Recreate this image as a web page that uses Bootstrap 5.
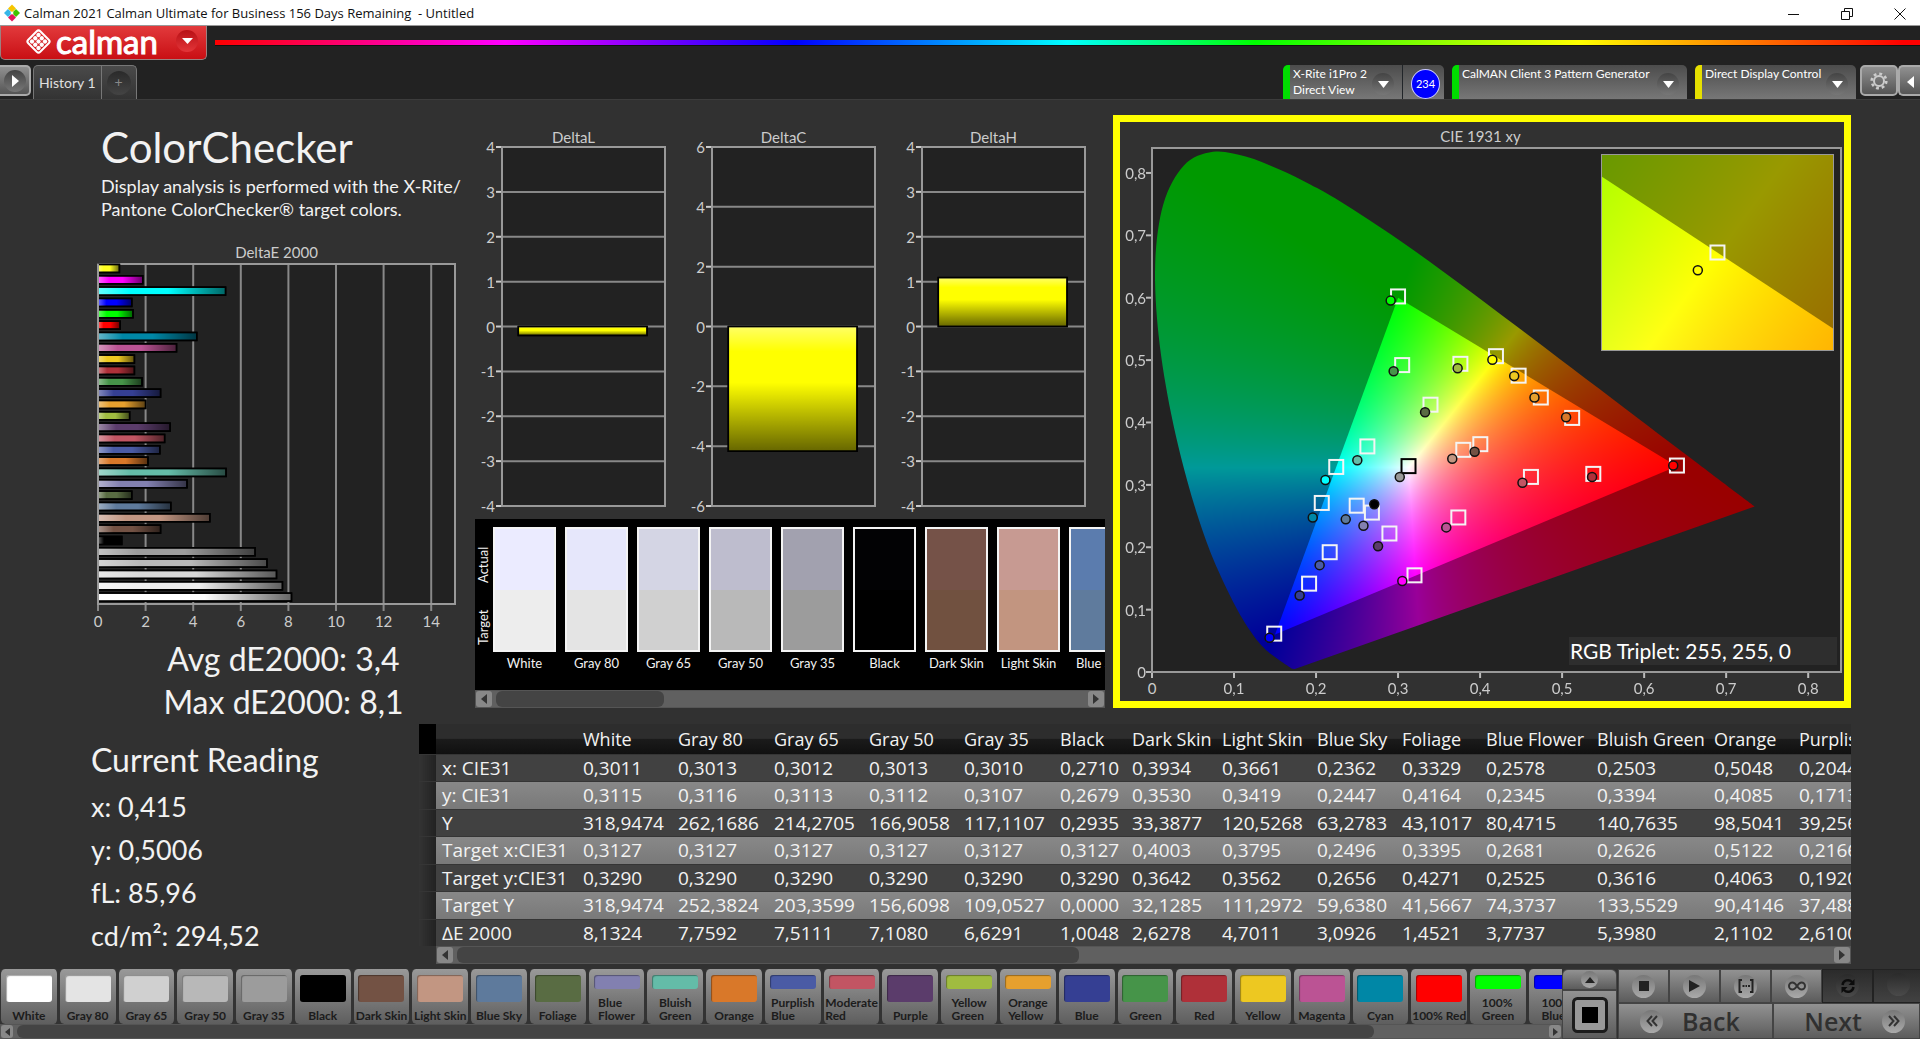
<!DOCTYPE html>
<html lang="en">
<head>
<meta charset="utf-8">
<meta name="viewport" content="width=device-width, initial-scale=1">
<title>Calman 2021 - Untitled</title>
<link href="https://cdn.jsdelivr.net/npm/bootstrap@5.3.0/dist/css/bootstrap.min.css" rel="stylesheet">
<style>
  body { font-family: Lato, "Open Sans", sans-serif; background: #313131; color: #f2f2f2; font-size: 16px; line-height: 20px; }
  button { font-family: inherit; color: inherit; padding: 0; border: 0; background: none; }
  .min-0 { min-width: 0; }

  /* window frame */
  .titlebar { height: 26px; background: #fff; color: #111; font-family: "Open Sans", sans-serif; font-size: 13px; border-bottom: 1px solid #999; overflow: hidden; }
  .titlebar .winbtns { margin-right: -6px; }
  .titlebar .winbtn { width: 53px; height: 25px; }
  .topbar { background: #222; }
  .brand { width: 207px; height: 34px; background: linear-gradient(#e23a3c, #c90f14); border: 1px solid #9c8080; border-top: 0; border-radius: 0 0 5px 5px; font-size: 33px; line-height: 26px; padding-bottom: 3px; color: #fff; -webkit-text-stroke: 1px #fff; }
  .drop { width: 22px; height: 22px; border-radius: 50%; background: linear-gradient(#444, #777); display: flex; align-items: center; justify-content: center; flex: none; }
  .drop.red { background: linear-gradient(#b81015, #e33539); }
  .rainbow { height: 6px; margin-top: 14px; background: linear-gradient(90deg, #f00 0, #f0f 17%, #00f 34%, #0ff 50%, #0f0 61%, #ff0 80%, #f00 99%); border-bottom: 1px solid #111; }
  .tabs { height: 34px; margin-top: 5px; }
  .knob { height: 31px; border: 2px solid #aaa; border-radius: 5px; background: linear-gradient(#909090, #555); }
  .tabgrp { margin-left: 2px; border: 1px solid #777; border-bottom: 0; border-radius: 5px 5px 0 0; background: linear-gradient(#4a4a4a, #333); color: #e0e0e0; font-size: 14px; }
  .tabgrp button { padding: 0 5px; }
  .tabgrp button + button { border-left: 1px solid #777; color: #888; }
  .plus { width: 24px; height: 24px; border-radius: 50%; background: linear-gradient(#2a2a2a, #444); line-height: 22px; }
  .device { background: linear-gradient(#4c4c4c, #777); border-radius: 5px 5px 0 0; border-left: 7px solid #0d0; font-size: 12px; line-height: 16px; color: #fff; text-align: left; padding-left: 3px; width: 161px; }
  .device > span:first-child { padding-top: 1px; }
  .device.wide { width: 235px; }
  .device.warn { border-left-color: #e6e000; }
  .count { width: 29px; height: 30px; border-radius: 50%; background: #00f; border: 1px solid #ccf; font-size: 11px; line-height: 27px; text-align: center; }

  /* workspace */
  .stage { border-top: 1px solid #3c3c3c; }
  .leftcol { flex: 0 0 475px; min-width: 0; padding: 23px 20px 1px 98px; }
  .leftcol h1 { font-size: 42px; line-height: 48px; margin: 0 0 4px 3px; font-weight: 400; }
  .leftcol p { font-size: 18px; line-height: 23px; margin: 0 0 21px 3px; }
  .leftcol .caption { margin-bottom: 2px; }
  .caption { font-size: 15px; line-height: 20px; color: #ccc; text-align: center; }
  .avg { font-size: 32px; line-height: 43px; text-align: center; margin-top: 33px; padding-left: 14px; }
  .plot { position: relative; background: #222; flex: 1 1 0; min-height: 0; }
  .plot svg, .plot canvas { position: absolute; inset: 0; width: 100%; height: 100%; overflow: visible; display: block; }
  .plot text { fill: #ccc; font-size: 15px; }
  .work { display: grid; grid-template-columns: minmax(0, 630fr) minmax(0, 738fr); gap: 8px; padding: 15px 69px 16px 0; }
  .ciecol { border: 7px solid #ff0; padding: 4px 3px 29px 32px; }
  .ciecol .caption { margin-bottom: 2px; padding-right: 32px; }
  .delta { flex: 1 1 0; padding: 12px 20px 13px 27px; }
  .delta .caption { padding-right: 20px; }
  .strip { background: #000; height: 171px; overflow: hidden; }
  .vert { writing-mode: vertical-rl; transform: rotate(180deg); font-size: 13px; line-height: 17px; width: 18px; height: 132px; padding-bottom: 6px; }
  .swatch { flex: 0 0 63px; font-size: 13px; line-height: 22px; text-align: center; }
  .swatch .pair { height: 125px; border: 2px solid #f4f4f4; display: flex; flex-direction: column; }
  .swatch .pair i { flex: 1; }
  .sbar { height: 18px; background: #606060; border: 1px solid #555; }
  .sbar .thumb { background: #444; border-radius: 6px; }
  .sbar button { width: 16px; background: #888; border-radius: 3px; display: flex; align-items: center; justify-content: center; flex: none; }
  .inset { position: absolute; right: 1%; top: 1.2%; width: 33.8%; height: 37.6%; border: 1px solid #999; }
  .triplet { position: absolute; right: 4px; bottom: 7px; width: 268px; height: 28px; background: #2e2e2e; font-size: 21px; line-height: 28px; padding-left: 1px; color: #fff; }

  /* readings */
  .reading { flex: 0 0 419px; padding: 14px 0 0 91px; font-size: 27px; line-height: 43px; }
  .reading h2 { font-size: 32px; line-height: 43px; margin: 0 0 4px; font-weight: 400; }
  .datawrap { flex: 1 1 0; margin-right: 69px; min-width: 0; }
  .datawrap .clip { overflow: hidden; }
  .grid { table-layout: fixed; width: 1540px; border-collapse: collapse; font-family: "Open Sans", sans-serif; font-size: 19px; line-height: 24px; white-space: nowrap; }
  .grid th, .grid td { font-weight: 400; padding: 0 0 0 6px; }
  .grid thead tr { height: 30px; background: linear-gradient(#2d2d2d 0, #2d2d2d 48%, #1b1b1b 50%, #101010 100%); font-size: 18px; }
  .grid tbody tr { height: 27px; background: #414141; border-top: 1px solid #353535; }
  .grid tbody tr:nth-child(even) { height: 28px; background: linear-gradient(#888, #797979); }
  .grid .rowhead { background: linear-gradient(90deg, #333, #222); padding: 0; }
  .grid thead .rowhead { background: #000; }

  /* transport */
  .footerbar { height: 70px; margin-top: 5px; background: #313131; }
  .patches { height: 55px; overflow: hidden; background: #333; }
  .patch { flex: 0 0 3.763%; height: 55px; border-left: 1px solid #333; border-right: 2px solid #333; border-radius: 5px; background: linear-gradient(#999, #5e5e5e); color: #1c1c1c; font-size: 12px; font-weight: 700; line-height: 13px; display: flex; flex-direction: column; justify-content: space-between; align-items: center; padding: 6px 0 2px; text-align: left; white-space: nowrap; overflow: hidden; }
  .patch i { width: 46px; height: 27px; border-radius: 3px; box-shadow: inset 1px 1px 1px rgba(0,0,0,.35); flex: none; }
  .patch.two i { height: 14px; }
  .tool { background: linear-gradient(#929292, #5c5c5c); border: 1px solid #444; }
  .tool.off { background: linear-gradient(#2b2b2b, #424242); border-color: #222; }
  .keys .tool { flex: 0 0 51px; }
  .disc { width: 23px; height: 23px; border-radius: 50%; background: linear-gradient(#777, #aaa); display: inline-flex; align-items: center; justify-content: center; }
  .off .disc { background: linear-gradient(#2a2a2a, #4a4a4a); }
  .nav-txt { font-family: "Open Sans", sans-serif; font-size: 25px; line-height: 30px; font-weight: 600; color: #303030; }
  .panelbtn { width: 55px; margin-right: 1px; }
  .transport { flex: 0 0 302px; overflow: hidden; }
  .backbtn { width: 155px; padding-left: 21px; gap: 19px; }
  .nextbtn { padding-right: 14px; gap: 20px; }
</style>
</head>
<body class="d-flex flex-column min-vh-100 overflow-hidden">

<header>
  <div class="titlebar d-flex align-items-center">
    <svg class="ms-1 me-1" width="16" height="20" viewBox="-9 -10 18 20"><path fill="#f6c500" d="M0-9.500 4.500-5 0-.5-4.500-5z"/><path fill="#41c300" d="M4.500-4.500 9 0 4.500 4.500 0 0z"/><path fill="#e3175c" d="M0 .5 4.500 5 0 9.500-4.500 5z"/><path fill="#36b6e8" d="M-4.500-4.500 0 0-4.500 4.500-9 0z"/><path fill="#fff" d="M0-2 2 0 0 2-2 0z"/></svg>
    <span class="flex-fill">Calman 2021 Calman Ultimate for Business 156 Days Remaining &nbsp;- Untitled</span>
    <div class="winbtns d-flex">
    <button class="winbtn" aria-label="Minimize"><svg width="12" height="12"><path d="M0 6.500H11" stroke="#111"/></svg></button>
    <button class="winbtn" aria-label="Restore"><svg width="12" height="12" fill="none" stroke="#111"><path d="M.5 3.500h8v8h-8zM3.500 3V.5h8v8H9"/></svg></button>
    <button class="winbtn" aria-label="Close"><svg width="12" height="12"><path d="M.5.5l11 11M11.500.5l-11 11" stroke="#111"/></svg></button>
    </div>
  </div>
  <div class="topbar">
    <div class="d-flex align-items-start">
      <button class="brand d-flex align-items-center flex-shrink-0 ps-4">
        <svg width="27" height="27" viewBox="-13.500 -13.500 27 27"><g transform="rotate(45)"><rect x="-8.500" y="-8.500" width="17" height="17" rx="2.500" fill="none" stroke="#fff" stroke-width="2"/><g fill="#fff" stroke="none"><circle cx="-4.600" cy="-4.600" r="2.200"/><circle cy="-4.600" r="2.200"/><circle cx="4.600" cy="-4.600" r="2.200"/><circle cx="-4.600" r="2.200"/><circle r="2.200"/><circle cx="4.600" r="2.200"/><circle cx="-4.600" cy="4.600" r="2.200"/><circle cy="4.600" r="2.200"/><circle cx="4.600" cy="4.600" r="2.200"/></g></g></svg>
        <span class="ms-1 flex-fill text-start">calman</span>
        <span class="drop red me-2"><svg width="11" height="6"><path d="M0 0h11L5.500 6z" fill="#fff"/></svg></span>
      </button>
      <div class="rainbow flex-fill ms-2"></div>
    </div>
    <div class="tabs d-flex">
      <button class="knob ps-1 flex-shrink-0 rounded-start-0 border-start-0" style="width:31px" aria-label="Expand"><span class="drop"><svg width="7" height="12"><path d="M0 0v12l7-6z" fill="#fff"/></svg></span></button>
      <div class="tabgrp d-flex me-auto">
        <button>History 1</button>
        <button aria-label="Add"><span class="plus d-block">+</span></button>
      </div>
      <button class="device d-flex"><span>X-Rite i1Pro 2<br>Direct View</span><span class="drop mt-2 ms-auto me-2"><svg width="11" height="7"><path d="M0 0h11L5.500 7z" fill="#fff"/></svg></span><span class="border-start border-dark ps-2 pe-1 pt-1 h-100"><span class="count d-block">234</span></span></button>
      <button class="device wide d-flex ms-2"><span>CalMAN Client 3 Pattern Generator</span><span class="drop mt-2 ms-auto me-2"><svg width="11" height="7"><path d="M0 0h11L5.500 7z" fill="#fff"/></svg></span></button>
      <button class="device warn d-flex ms-2 me-1"><span>Direct Display Control</span><span class="drop mt-2 ms-auto me-2"><svg width="11" height="7"><path d="M0 0h11L5.500 7z" fill="#fff"/></svg></span></button>
      <button class="knob flex-shrink-0" style="width:38px" aria-label="Settings"><svg width="20" height="20" viewBox="-10 -10 20 20" fill="none" stroke="#ccc"><circle r="5" stroke-width="2"/><circle r="7.300" stroke-width="2.600" stroke-dasharray="2.870 2.870"/></svg></button>
      <button class="knob flex-shrink-0 rounded-end-0 border-end-0" style="width:22px" aria-label="Collapse"><svg width="7" height="12"><path d="M7 0v12L0 6z" fill="#fff"/></svg></button>
    </div>
  </div>
</header>

<main class="stage flex-fill d-flex flex-column">
  <div class="d-flex flex-fill">
    <section class="leftcol d-flex flex-column">
      <h1>ColorChecker</h1>
      <p class="text-nowrap">Display analysis is performed with the X-Rite/<br>Pantone ColorChecker® target colors.</p>
      <div class="caption">DeltaE 2000</div>
      <div class="plot" id="deltaE"></div>
      <div class="avg">Avg dE2000: 3,4<br>Max dE2000: 8,1</div>
    </section>
    <div class="work flex-fill min-0">
      <section class="d-flex flex-column min-0">
        <div class="d-flex flex-fill">
          <div class="delta d-flex flex-column"><div class="caption">DeltaL</div><div class="plot" id="deltaL"></div></div>
          <div class="delta d-flex flex-column"><div class="caption">DeltaC</div><div class="plot" id="deltaC"></div></div>
          <div class="delta d-flex flex-column"><div class="caption">DeltaH</div><div class="plot" id="deltaH"></div></div>
        </div>
        <div class="strip d-flex pt-2">
          <div class="vert d-flex justify-content-around flex-shrink-0"><span>Target</span><span>Actual</span></div>
          <div class="d-flex" id="swatches" style="gap:9px"></div>
        </div>
        <div class="sbar d-flex"><button aria-label="Scroll left"><svg width="6" height="10"><path d="M6 0v10L0 5z" fill="#333"/></svg></button><div class="thumb ms-1" style="width:168px"></div><button class="ms-auto" aria-label="Scroll right"><svg width="6" height="10"><path d="M0 0v10l6-5z" fill="#333"/></svg></button></div>
      </section>
      <section class="ciecol d-flex flex-column min-0">
        <div class="caption">CIE 1931 xy</div>
        <div class="plot" id="cie">
          <canvas id="gamut"></canvas>
          <div class="inset"><canvas id="gamutZoom"></canvas></div>
          <div class="triplet">RGB Triplet: 255, 255, 0</div>
        </div>
      </section>
    </div>
  </div>

  <div class="d-flex">
    <section class="reading">
      <h2>Current Reading</h2>
      <div>x: 0,415</div><div>y: 0,5006</div><div>fL: 85,96</div><div>cd/m²: 294,52</div>
    </section>
    <section class="datawrap">
      <div class="clip"><table class="grid" id="grid"></table></div>
      <div class="sbar d-flex" style="margin-left:17px"><button aria-label="Scroll left"><svg width="6" height="10"><path d="M6 0v10L0 5z" fill="#333"/></svg></button><div class="thumb ms-1" style="width:44%"></div><button class="ms-auto" aria-label="Scroll right"><svg width="6" height="10"><path d="M0 0v10l6-5z" fill="#333"/></svg></button></div>
    </section>
  </div>
</main>

<footer class="footerbar d-flex">
  <div class="flex-fill min-0">
    <div class="patches d-flex" id="patches"></div>
    <div class="sbar d-flex" style="height:15px"><button aria-label="Scroll left" style="width:12px"><svg width="5" height="8"><path d="M5 0v8L0 4z" fill="#333"/></svg></button><div class="thumb ms-1" style="width:87%"></div><button class="ms-auto" aria-label="Scroll right" style="width:12px"><svg width="5" height="8"><path d="M0 0v8l5-4z" fill="#333"/></svg></button></div>
  </div>
  <div class="panelbtn d-flex flex-column flex-shrink-0">
    <button class="tool rounded-top d-flex align-items-center justify-content-center" style="height:21px" aria-label="Show"><span class="disc" style="width:17px;height:17px"><svg width="10" height="6"><path d="M0 6h10L5 0z" fill="#222"/></svg></span></button>
    <button class="tool flex-fill" aria-label="Stop pattern"><svg width="36" height="36"><rect x="1.500" y="1.500" width="33" height="33" rx="4" fill="#999" stroke="#1c1c1c" stroke-width="3"/><rect x="10" y="10" width="16" height="16" fill="#000"/></svg></button>
  </div>
  <div class="transport d-flex flex-column">
    <div class="keys d-flex flex-fill">
      <button class="tool" aria-label="Stop"><span class="disc"><svg width="10" height="10"><rect width="10" height="10" fill="#222"/></svg></span></button>
      <button class="tool" aria-label="Play"><span class="disc"><svg width="11" height="12"><path d="M0 0v12l11-6z" fill="#222"/></svg></span></button>
      <button class="tool" aria-label="Range"><span class="disc"><svg width="16" height="14" fill="none" stroke="#222" stroke-width="2"><path d="M4 1H1.500v12H4M12 1h2.500v12H12M4.500 7h2M7.500 7h1.500M10 7h2"/></svg></span></button>
      <button class="tool" aria-label="Loop"><span class="disc"><svg width="18" height="10" viewBox="0 0 18 10" fill="none" stroke="#333" stroke-width="2"><path d="M9 5C7 2 5.500 1.500 4.500 1.500a3.500 3.500 0 0 0 0 7C5.500 8.500 7 8 9 5s3.500-3.500 4.500-3.500a3.500 3.500 0 0 1 0 7C12.500 8.500 11 8 9 5z"/></svg></span></button>
      <button class="tool off" aria-label="Refresh"><span class="disc"><svg width="16" height="16" viewBox="0 0 16 16" fill="none" stroke="#0c0c0c" stroke-width="2.400"><path d="M2.500 7a5.500 5.500 0 0 1 9.500-3M13.500 9a5.500 5.500 0 0 1-9.500 3"/><path fill="#0c0c0c" stroke="none" d="M14.500 1v6h-6zM1.500 15V9h6z"/></svg></span></button>
      <button class="tool off" aria-label="Record"><span class="disc"></span></button>
    </div>
    <div class="d-flex" style="height:36px">
      <button class="tool backbtn d-flex align-items-center"><span class="disc"><svg width="12" height="12" fill="none" stroke="#333" stroke-width="2"><path d="M6 1 1.500 6 6 11M11 1 6.500 6 11 11"/></svg></span><span class="nav-txt">Back</span></button>
      <button class="tool nextbtn d-flex align-items-center flex-fill justify-content-end"><span class="nav-txt">Next</span><span class="disc"><svg width="12" height="12" fill="none" stroke="#333" stroke-width="2"><path d="M1 1l4.500 5L1 11M6 1l4.500 5L6 11"/></svg></span></button>
    </div>
  </div>
</footer>

<script src="https://cdn.jsdelivr.net/npm/bootstrap@5.3.0/dist/js/bootstrap.bundle.min.js"></script>
<script>
const $ = id => document.getElementById(id);

/* patches: name, target colour */
const patches = [['White','#fff'],['Gray 80','#e4e4e4'],['Gray 65','#d0d0d0'],['Gray 50','#b8b8b8'],['Gray 35','#9c9c9c'],['Black','#000'],['Dark Skin','#735244'],['Light Skin','#c29682'],['Blue Sky','#5e7a9c'],['Foliage','#596c43'],['Blue<br>Flower','#8280b0'],['Bluish<br>Green','#64bca8'],['Orange','#d97829'],['Purplish<br>Blue','#4a5ba5'],['Moderate<br>Red','#c25563'],['Purple','#5b3c6b'],['Yellow<br>Green','#a0bc40'],['Orange<br>Yellow','#e6a02e'],['Blue','#353f93'],['Green','#469449'],['Red','#af3039'],['Yellow','#edc821'],['Magenta','#bb5394'],['Cyan','#0087a6'],['100% Red','#f00'],['100%<br>Green','#0f0'],['100%<br>Blue','#00f']];
$('patches').innerHTML = patches.map(([n, c]) => `<button class="patch${n.includes('<br>') ? ' two' : ''}"><i style="background:${c}"></i><span>${n}</span></button>`).join('');

/* actual over target */
const pairs = [['White','#ebebff','#ededed'],['Gray 80','#e6e7fb','#e4e4e4'],['Gray 65','#d4d5e4','#d0d0d0'],['Gray 50','#bebdce','#b9b9b9'],['Gray 35','#a2a1af','#9c9c9c'],['Black','#020204','#000'],['Dark Skin','#755248','#715140'],['Light Skin','#c79a92','#c29580'],['Blue Sky','#5b7cae','#5f7b9d']];
$('swatches').innerHTML = pairs.map(([n, a, t]) => `<div class="swatch"><div class="pair"><i style="background:${a}"></i><i style="background:${t}"></i></div>${n}</div>`).join('');

/* results table */
const cols = [['White',95],['Gray 80',96],['Gray 65',95],['Gray 50',95],['Gray 35',96],['Black',72],['Dark Skin',90],['Light Skin',95],['Blue Sky',85],['Foliage',84],['Blue Flower',111],['Bluish Green',117],['Orange',85],['Purplish Blue',166]];
const rows = `x: CIE31|0,3011|0,3013|0,3012|0,3013|0,3010|0,2710|0,3934|0,3661|0,2362|0,3329|0,2578|0,2503|0,5048|0,2044
y: CIE31|0,3115|0,3116|0,3113|0,3112|0,3107|0,2679|0,3530|0,3419|0,2447|0,4164|0,2345|0,3394|0,4085|0,1713
Y|318,9474|262,1686|214,2705|166,9058|117,1107|0,2935|33,3877|120,5268|63,2783|43,1017|80,4715|140,7635|98,5041|39,2560
Target x:CIE31|0,3127|0,3127|0,3127|0,3127|0,3127|0,3127|0,4003|0,3795|0,2496|0,3395|0,2681|0,2626|0,5122|0,2166
Target y:CIE31|0,3290|0,3290|0,3290|0,3290|0,3290|0,3290|0,3642|0,3562|0,2656|0,4271|0,2525|0,3616|0,4063|0,1920
Target Y|318,9474|252,3824|203,3599|156,6098|109,0527|0,0000|32,1285|111,2972|59,6380|41,5667|74,3737|133,5529|90,4146|37,4880
ΔE 2000|8,1324|7,7592|7,5111|7,1080|6,6291|1,0048|2,6278|4,7011|3,0926|1,4521|3,7737|5,3980|2,1102|2,6100`.split('\n').map(r => r.split('|'));
$('grid').innerHTML = `<colgroup><col style="width:17px"><col style="width:141px">${cols.map(c => `<col style="width:${c[1]}px">`).join('')}</colgroup>
<thead><tr><th class="rowhead"></th><th></th>${cols.map(c => `<th scope="col">${c[0]}</th>`).join('')}</tr></thead>
<tbody>${rows.map(r => `<tr><td class="rowhead"></td><th scope="row">${r[0]}</th>${r.slice(1).map(v => `<td>${v}</td>`).join('')}</tr>`).join('')}</tbody>`;

/* charts: coordinates in percent of the plot, so they follow its size */
const line = (x1, y1, x2, y2, c) => `<line x1="${x1}%" y1="${y1}%" x2="${x2}%" y2="${y2}%" stroke="${c || '#888'}" stroke-width="2"/>`;
const frame = '<rect width="100%" height="100%" fill="none" stroke="#999" stroke-width="2"/>';
const defs = `<svg width="0" height="0" style="position:absolute"><defs>
<linearGradient id="shadeX"><stop offset="0" stop-color="#fff" stop-opacity=".4"/><stop offset=".25" stop-color="#fff" stop-opacity="0"/><stop offset=".55" stop-opacity="0"/><stop offset="1" stop-opacity=".6"/></linearGradient>
<linearGradient id="shadeY" x2="0" y2="1"><stop offset="0" stop-color="#fff" stop-opacity=".4"/><stop offset=".2" stop-color="#fff" stop-opacity="0"/><stop offset=".45" stop-opacity="0"/><stop offset="1" stop-opacity=".6"/></linearGradient></defs></svg>`;
document.body.insertAdjacentHTML('beforeend', defs);

const dE = [['#ff2',.9],['#f0f',1.88],['#0ff',5.36],['#00f',1.42],['#0f0',1.47],['#f00',.93],['#0087a6',4.15],['#bb5394',3.3],['#edc821',1.53],['#af3039',1.53],['#469449',1.85],['#353f93',2.63],['#e6a02e',2],['#a0bc40',1.33],['#5b3c6b',3.03],['#c25563',2.8],['#4a5ba5',2.6],['#d97829',2.1],['#64bca8',5.38],['#8280b0',3.74],['#596c43',1.42],['#5e7a9c',3.06],['#c29682',4.7],['#735244',2.63],['#000',1],['#9c9c9c',6.6],['#b8b8b8',7.1],['#d8d8d8',7.5],['#eee',7.75],['#fff',8.13]];
let s = '';
for (let v = 0; v < 15; v += 2) s += line(v / .15, 0, v / .15, 100) + `<g transform="translate(0 7)"><line x1="${v / .15}%" y1="100%" x2="${v / .15}%" y2="98%" stroke="#888" stroke-width="2"/></g><text x="${v / .15}%" y="100%" dy="23" text-anchor="middle">${v}</text>`;
s += frame;
dE.forEach(([c, v], i) => { for (const f of [c, 'url(#shadeX)']) s += `<rect x="0" y="${(i + .04) / .3}%" width="${v / .15}%" height="2.350%" fill="${f}" stroke="#000" stroke-width="1.500"/>`; });
s += line(0, 0, 0, 100, '#999');
$('deltaE').innerHTML = `<svg>${s}</svg>`;

function delta(id, max, step, val) {
  let s = '';
  for (let v = -max; v <= max; v += step) {
    const y = (max - v) / max * 50;
    s += line(0, y, 100, y) + `<g transform="translate(-6 0)"><line x1="0" x2="6" y1="${y}%" y2="${y}%" stroke="#ccc" stroke-width="2"/></g><text x="0" y="${y}%" dx="-7" dy="6" text-anchor="end">${v}</text>`;
  }
  s += frame;
  const y = (max - Math.max(val, 0)) / max * 50, h = Math.abs(val) / max * 50;
  for (const f of ['#ff0', 'url(#shadeY)']) s += `<rect x="10%" y="${y}%" width="79%" height="${h}%" fill="${f}" stroke="#000" stroke-width="1.500"/>`;
  $(id).innerHTML = `<svg>${s}</svg>`;
}
delta('deltaL', 4, 1, -.2);
delta('deltaC', 6, 2, -4.17);
delta('deltaH', 4, 1, 1.09);

/* chromaticity diagram */
const locus = [.1741,.005,.1714,.0051,.1689,.0069,.1644,.0109,.1566,.0177,.144,.0297,.1355,.0399,.1241,.0578,.1096,.0868,.0913,.1327,.0687,.2007,.0454,.295,.0235,.4127,.0082,.5384,.0039,.6548,.0139,.7502,.0389,.812,.0743,.8338,.1142,.8262,.1547,.8059,.1929,.7816,.2296,.7543,.3016,.6923,.3731,.6245,.4441,.5547,.5125,.4866,.5752,.4242,.627,.3725,.6658,.334,.6915,.3083,.719,.2809,.7347,.2653];
const primaries = [[.64,.33],[.3,.6],[.15,.06]];
function field(w, h, b, k) {
  const c = document.createElement('canvas'); c.width = w; c.height = h;
  const g = c.getContext('2d'), im = g.createImageData(w, h);
  for (let j = 0, o = 0; j < h; j++) for (let i = 0; i < w; i++, o += 4) {
    const x = b[0] + (b[1] - b[0]) * i / w, y = b[3] - (b[3] - b[2]) * j / h, z = 1 - x - y;
    const r = Math.max(0, 3.2406 * x - 1.5372 * y - .4986 * z), gg = Math.max(0, -.9689 * x + 1.8758 * y + .0415 * z), bb = Math.max(0, .0557 * x - .204 * y + 1.057 * z);
    const m = k * 255 / Math.max(r, gg, bb);
    im.data[o] = r * m; im.data[o + 1] = gg * m; im.data[o + 2] = bb * m; im.data[o + 3] = 255;
  }
  g.putImageData(im, 0, 0);
  return c;
}
function paint(cv, b) {
  const w = cv.width = cv.clientWidth, h = cv.height = cv.clientHeight, g = cv.getContext('2d');
  const P = (x, y) => [(x - b[0]) / (b[1] - b[0]) * w, (b[3] - y) / (b[3] - b[2]) * h];
  const pts = []; for (let i = 0; i < locus.length; i += 2) pts.push(P(locus[i], locus[i + 1]));
  g.save(); g.beginPath(); g.moveTo(...pts[0]);
  for (let i = 0; i < pts.length - 1; i++) {
    const a = pts[Math.max(0, i - 1)], p = pts[i], q = pts[i + 1], d = pts[Math.min(pts.length - 1, i + 2)];
    g.bezierCurveTo(p[0] + (q[0] - a[0]) / 6, p[1] + (q[1] - a[1]) / 6, q[0] - (d[0] - p[0]) / 6, q[1] - (d[1] - p[1]) / 6, q[0], q[1]);
  }
  g.closePath(); g.clip(); g.drawImage(field(w, h, b, .6), 0, 0); g.restore();
  g.save(); g.beginPath(); primaries.forEach(p => g.lineTo(...P(...p))); g.closePath(); g.clip(); g.drawImage(field(w, h, b, 1), 0, 0); g.restore();
}
const full = [0, .84, 0, .84], near = [.394, .4446, .4795, .5311];
function paintAll() { paint($('gamut'), full); paint($('gamutZoom'), near); }

/* target x,y, actual x,y, fill */
const marks = [[.3,.602,.291,.5954,'#0f0'],[.305,.492,.2946,.482,'#469449'],[.376,.494,.3726,.487,'#a0bc40'],[.4193,.5063,.415,.5006,'#ff0'],[.447,.475,.4416,.4746,'#edc821'],[.3395,.4285,.3329,.4164,'#596c43'],[.2626,.3616,.2503,.3394,'#64bca8'],[.2246,.3287,.2114,.3078,'#0ff'],[.3795,.3562,.3661,.3419,'#c29682'],[.4003,.3652,.3934,.353,'#735244'],[.207,.271,.196,.2477,'#0087a6'],[.2496,.2666,.2362,.2447,'#5e7a9c'],[.2681,.2555,.2578,.2345,'#8280b0'],[.2895,.222,.2756,.2017,'#5b3c6b'],[.2166,.192,.2044,.1713,'#4a5ba5'],[.1915,.1416,.18,.1226,'#353f93'],[.149,.0615,.1433,.055,'#00f'],[.3735,.2477,.3588,.2318,'#bb5394'],[.32,.155,.3052,.146,'#f0f'],[.474,.44,.4663,.44,'#e6a02e'],[.5122,.4073,.5048,.4085,'#d97829'],[.462,.3127,.4517,.3035,'#c25563'],[.538,.3176,.5365,.3127,'#af3039'],[.64,.331,.6355,.331,'#f00']];
const box = (x, y, c) => `<rect x="${x}%" y="${y}%" width="14" height="14" transform="translate(-7 -7)" fill="none" stroke="${c}" stroke-width="2"/>`;
const dot = (x, y, c) => `<circle cx="${x}%" cy="${y}%" r="4.500" fill="${c}" stroke="#111" stroke-width="1.500"/>`;
const px = v => (v / .84 * 100).toFixed(2), py = v => (100 - v / .84 * 100).toFixed(2);
s = '';
for (let i = 0; i < 9; i++) {
  const t = i ? '0,' + i : '0';
  s += `<g transform="translate(0 6)"><line x1="${px(i / 10)}%" x2="${px(i / 10)}%" y1="99%" y2="100%" stroke="#bbb" stroke-width="2"/></g><text x="${px(i / 10)}%" y="100%" dy="22" text-anchor="middle">${t}</text>`;
  s += `<g transform="translate(-6 0)"><line x1="0" x2="6" y1="${py(i / 10)}%" y2="${py(i / 10)}%" stroke="#bbb" stroke-width="2"/></g><text x="0" y="${py(i / 10)}%" dx="-6" dy="6" text-anchor="end">${t}</text>`;
}
s += frame + box(px(.3127), py(.33), '#000') + marks.map(m => box(px(m[0]), py(m[1]), '#f4f4f4')).join('') + dot(px(.3021), py(.3125), '#999') + marks.map(m => dot(px(m[2]), py(m[3]), m[4])).join('') + dot(px(.271), py(.2689), '#000');
$('gamut').insertAdjacentHTML('afterend', `<svg>${s}</svg>`);
const nx = v => (v - near[0]) / (near[1] - near[0]) * 100, ny = v => (near[3] - v) / (near[3] - near[2]) * 100;
$('gamutZoom').insertAdjacentHTML('afterend', `<svg>${box(nx(.4193), ny(.5053), '#f4f4f4')}${dot(nx(.415), ny(.5006), '#ff0')}</svg>`);
paintAll();
addEventListener('resize', paintAll);
</script>
</body>
</html>
